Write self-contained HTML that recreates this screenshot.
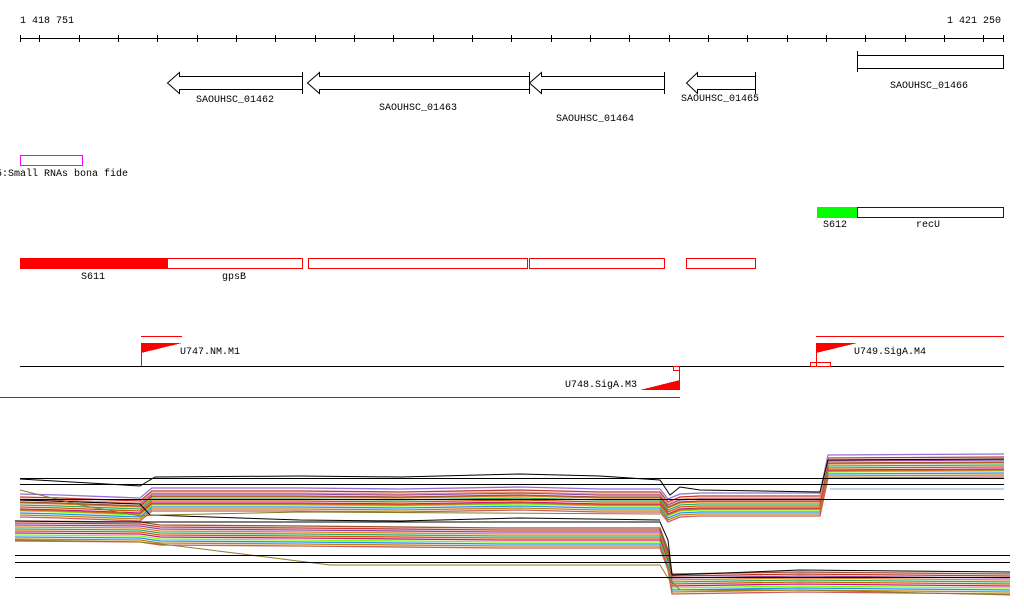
<!DOCTYPE html>
<html><head><meta charset="utf-8"><style>
html,body{margin:0;padding:0;background:#fff;width:1024px;height:611px;overflow:hidden}
svg text{font-family:"Liberation Mono","DejaVu Sans Mono",monospace;font-size:10px;fill:#000}
</style></head><body>
<svg width="1024" height="611" viewBox="0 0 1024 611" xmlns="http://www.w3.org/2000/svg" shape-rendering="crispEdges">
<text x="20" y="23">1 418 751</text>
<text x="947" y="23">1 421 250</text>
<line x1="20" y1="38.5" x2="1004" y2="38.5" stroke="#000"/>
<g stroke="#000">
<line x1="20.5" y1="35" x2="20.5" y2="42"/><line x1="39.5" y1="35" x2="39.5" y2="42"/><line x1="79.5" y1="35" x2="79.5" y2="42"/><line x1="118.5" y1="35" x2="118.5" y2="42"/><line x1="157.5" y1="35" x2="157.5" y2="42"/><line x1="197.5" y1="35" x2="197.5" y2="42"/><line x1="236.5" y1="35" x2="236.5" y2="42"/><line x1="275.5" y1="35" x2="275.5" y2="42"/><line x1="315.5" y1="35" x2="315.5" y2="42"/><line x1="354.5" y1="35" x2="354.5" y2="42"/><line x1="393.5" y1="35" x2="393.5" y2="42"/><line x1="433.5" y1="35" x2="433.5" y2="42"/><line x1="472.5" y1="35" x2="472.5" y2="42"/><line x1="511.5" y1="35" x2="511.5" y2="42"/><line x1="551.5" y1="35" x2="551.5" y2="42"/><line x1="590.5" y1="35" x2="590.5" y2="42"/><line x1="629.5" y1="35" x2="629.5" y2="42"/><line x1="669.5" y1="35" x2="669.5" y2="42"/><line x1="708.5" y1="35" x2="708.5" y2="42"/><line x1="747.5" y1="35" x2="747.5" y2="42"/><line x1="787.5" y1="35" x2="787.5" y2="42"/><line x1="826.5" y1="35" x2="826.5" y2="42"/><line x1="865.5" y1="35" x2="865.5" y2="42"/><line x1="905.5" y1="35" x2="905.5" y2="42"/><line x1="944.5" y1="35" x2="944.5" y2="42"/><line x1="983.5" y1="35" x2="983.5" y2="42"/><line x1="1003.5" y1="35" x2="1003.5" y2="42"/>
</g>
<g fill="#fff" stroke="#000" shape-rendering="auto">
<path d="M302.5,76.5 H179.5 V72.5 L167.5,83 L179.5,93.5 V89.5 H302.5"/>
<line x1="302.5" y1="72" x2="302.5" y2="94"/>
<path d="M529.5,76.5 H319.5 V72.5 L307.5,83 L319.5,93.5 V89.5 H529.5"/>
<path d="M664.5,76.5 H541.5 V72.5 L529.5,83 L541.5,93.5 V89.5 H664.5"/>
<line x1="529.5" y1="72" x2="529.5" y2="94"/>
<line x1="664.5" y1="72" x2="664.5" y2="94"/>
<path d="M755.5,76.5 H697.5 V72.5 L686.5,83 L697.5,93.5 V89.5 H755.5"/>
<line x1="755.5" y1="72" x2="755.5" y2="94"/>
<rect x="857.5" y="55.5" width="146" height="13"/>
<line x1="857.5" y1="51" x2="857.5" y2="72"/>
</g>
<text x="196" y="102">SAOUHSC_01462</text>
<text x="379" y="110">SAOUHSC_01463</text>
<text x="556" y="121">SAOUHSC_01464</text>
<text x="681" y="101">SAOUHSC_01465</text>
<text x="890" y="88">SAOUHSC_01466</text>
<rect x="20.5" y="155.5" width="62" height="10" fill="none" stroke="#f0f"/>
<text x="-4" y="176">5:Small RNAs bona fide</text>
<rect x="817" y="207" width="40" height="11" fill="#0f0"/>
<rect x="857.5" y="207.5" width="146" height="10" fill="#fff" stroke="#00f"/>
<text x="823" y="227">S612</text>
<text x="916" y="227">recU</text>
<rect x="20" y="258" width="147" height="11" fill="#f00"/>
<g fill="#fff" stroke="#f00">
<rect x="167.5" y="258.5" width="135" height="10"/>
<rect x="308.5" y="258.5" width="219" height="10"/>
<rect x="529.5" y="258.5" width="135" height="10"/>
<rect x="686.5" y="258.5" width="69" height="10"/>
</g>
<text x="81" y="279">S611</text>
<text x="222" y="279">gpsB</text>
<line x1="20" y1="366.5" x2="1004" y2="366.5" stroke="#000"/>
<line x1="141" y1="336.5" x2="182" y2="336.5" stroke="#f00"/>
<line x1="141.5" y1="343" x2="141.5" y2="366" stroke="#f00"/>
<path d="M141,343 H182 L141,353 Z" fill="#f00"/>
<text x="180" y="354">U747.NM.M1</text>
<line x1="816" y1="336.5" x2="1004" y2="336.5" stroke="#f00"/>
<line x1="816.5" y1="343" x2="816.5" y2="366" stroke="#f00"/>
<path d="M816,343 H857 L816,353 Z" fill="#f00"/>
<rect x="810.5" y="362.5" width="20" height="4" fill="none" stroke="#f00"/>
<text x="854" y="354">U749.SigA.M4</text>
<line x1="679.5" y1="366" x2="679.5" y2="390" stroke="#f00"/>
<path d="M680,380 V390 H640 Z" fill="#f00"/>
<rect x="673.5" y="366.5" width="6" height="4" fill="none" stroke="#f00"/>
<text x="565" y="387">U748.SigA.M3</text>
<line x1="0" y1="397.5" x2="680" y2="397.5" stroke="#f00"/>
<defs>
<polyline id="b1" fill="none" points="20,506 60,507 140,510 152,500 300,500 400,501 520,499 600,501 660,501 668,511 680,506 700,505 820,505 828,467 1004,466"/>
<polyline id="b2" fill="none" points="15,531 140,532 160,535 300,536 500,538 660,538 668,560 672,584 800,582 1010,584"/>
</defs>
<g shape-rendering="auto" stroke-width="1.3">
<use href="#b1" stroke="#c0392b" y="-9"/><use href="#b1" stroke="#8e44ad" y="-6"/><use href="#b1" stroke="#e67e22" y="-3"/><use href="#b1" stroke="#27ae60" y="-1"/><use href="#b1" stroke="#d35400" y="1"/><use href="#b1" stroke="#c71585" y="3"/><use href="#b1" stroke="#7cfc00" y="5"/><use href="#b1" stroke="#1e90ff" y="7"/><use href="#b1" stroke="#b8860b" y="9"/><use href="#b1" stroke="#cd5c5c" y="11"/><use href="#b1" stroke="#a0522d" y="-4"/><use href="#b1" stroke="#9370db" y="-12"/><use href="#b1" stroke="#e9967a" y="-7"/><use href="#b1" stroke="#d2691e" y="4"/>
<use href="#b2" stroke="#c0392b" y="-8"/><use href="#b2" stroke="#8e44ad" y="-6"/><use href="#b2" stroke="#e67e22" y="-4"/><use href="#b2" stroke="#27ae60" y="-2"/><use href="#b2" stroke="#d35400" y="0"/><use href="#b2" stroke="#c71585" y="2"/><use href="#b2" stroke="#7cfc00" y="4"/><use href="#b2" stroke="#1e90ff" y="6"/><use href="#b2" stroke="#b8860b" y="8"/><use href="#b2" stroke="#cd5c5c" y="10"/><use href="#b2" stroke="#a0522d" y="-10"/>
</g>
<g fill="none" stroke-width="1" shape-rendering="auto">
<polyline stroke="#000" points="20,479 140,486 155,477 300,476 400,477 520,474 600,476 660,480 670,495 680,487 700,490 820,492 828,460 1004,459"/>
<polyline stroke="#000" points="20,500 140,504 150,515 300,520 400,521 520,518 660,520"/>
<polyline stroke="#000" points="15,521 100,522 300,522 660,522 668,540 672,575 800,570 1010,572"/>
<polyline stroke="#8b7d2b" points="15,540 140,542 170,545 330,565 660,565 668,578 680,590 800,590 1010,595"/>
<polyline stroke="#8b7d2b" points="20,490 80,505 140,516 160,515 300,512 660,514"/>
<polyline stroke="#6cb4ee" points="830,489 1004,489"/>
</g>
<g stroke="#000">
<line x1="20" y1="478.5" x2="1004" y2="478.5"/>
<line x1="20" y1="484.5" x2="1004" y2="484.5"/>
<line x1="20" y1="499.5" x2="1004" y2="499.5"/>
<line x1="15" y1="555.5" x2="1010" y2="555.5"/>
<line x1="15" y1="562.5" x2="1010" y2="562.5"/>
<line x1="15" y1="577.5" x2="1010" y2="577.5"/>
</g>
</svg>
</body></html>
